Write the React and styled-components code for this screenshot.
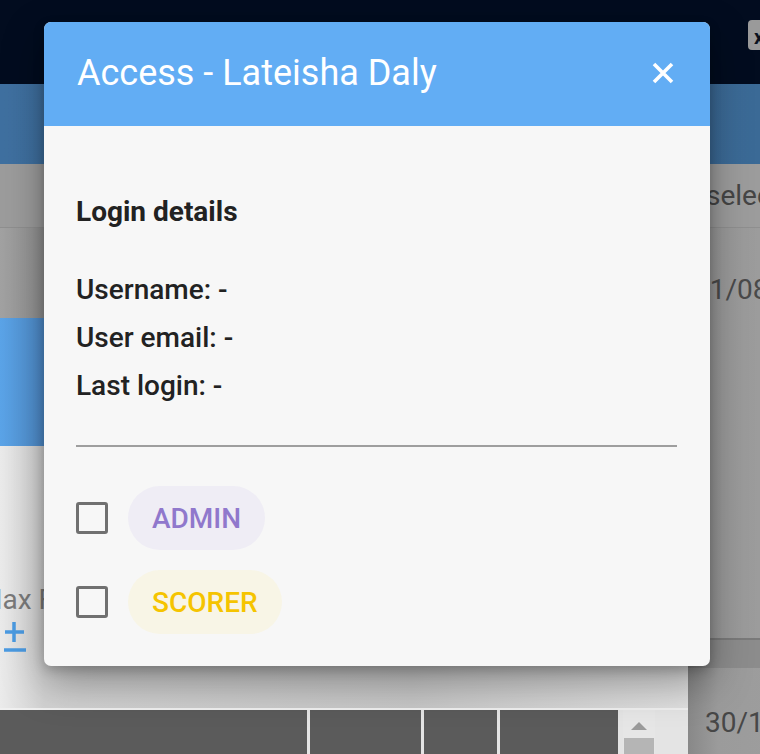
import React from "react";
import styled, { createGlobalStyle } from "styled-components";

const GlobalStyle = createGlobalStyle`
  html, body {
    margin: 0;
    padding: 0;
    height: 100%;
    overflow: hidden;
  }
  body {
    font-family: Roboto, "Liberation Sans", Arial, sans-serif;
    background: #020c1f;
  }
`;

const Page = styled.div`
  display: flex;
  flex-direction: column;
  height: 754px;
  width: 760px;
  overflow: hidden;
  position: relative;
`;

const TopBar = styled.div`
  align-items: flex-start;
  background: #020c1f;
  display: flex;
  height: 84px;
  justify-content: flex-end;
  padding-top: 20px;
  box-sizing: border-box;
`;

const TabStub = styled.div`
  background: #9a9a9a;
  border-radius: 4px 0 0 4px;
  color: #0a1220;
  font-size: 20px;
  font-weight: 700;
  height: 30px;
  line-height: 34px;
  padding-left: 6px;
  width: 6px;
  overflow: hidden;
`;

const AppHeader = styled.div`
  background: linear-gradient(90deg, #3f70a0, #3b6a96);
  height: 80px;
`;

const FilterBar = styled.div`
  background: #9c9c9c;
  display: grid;
  grid-template-columns: 688px 1fr;
  height: 64px;
  border-bottom: 1px solid #8f8f8f;
  box-sizing: border-box;
`;

const DimText = styled.span`
  color: ${(p) => p.color || "#454545"};
  font-size: 28px;
  padding-left: ${(p) => p.indent || 18}px;
  padding-top: ${(p) => p.top || 0}px;
  white-space: nowrap;
  align-self: ${(p) => (p.top ? "flex-start" : "center")};
`;

const Main = styled.div`
  display: grid;
  flex: 1;
  grid-template-columns: 688px 1fr;
  min-height: 0;
`;

const LeftPane = styled.div`
  display: flex;
  flex-direction: column;
`;

const GrayBlock = styled.div`
  background: linear-gradient(90deg, #a2a2a2, #8a8a8a 60px);
  height: 90px;
`;

const BlueBlock = styled.div`
  background: linear-gradient(90deg, #5ba4e8, #4f8dcc 44px);
  height: 128px;
`;

const LightBlock = styled.div`
  background: linear-gradient(90deg, #ebebeb, #d2d2d2 44px, #c8c8c8 60%, #e0e0e0);
  display: flex;
  flex: 1;
  flex-direction: column;
  justify-content: flex-end;
  padding-bottom: 54px;
`;

const FieldLabel = styled.div`
  color: #7a7a7a;
  font-size: 28px;
  margin-left: -22px;
  white-space: nowrap;
`;

const PlusMinus = styled.svg`
  display: block;
  margin: 4px 0 0 3px;
`;

const TableHead = styled.div`
  background: #e4e4e4;
  border-top: 2px solid #f0f0f0;
  display: flex;
  gap: 3px;
  height: 46px;
  box-sizing: border-box;
`;

const HeadCell = styled.div`
  background: #5b5b5b;
  width: ${(p) => p.w}px;
`;

const ScrollTrack = styled.div`
  align-items: center;
  background: #e6e6e6;
  display: flex;
  flex-direction: column;
  margin-left: 2px;
  width: 32px;
`;

const ScrollArrow = styled.div`
  border-bottom: 8px solid #9a9a9a;
  border-left: 8px solid transparent;
  border-right: 8px solid transparent;
  height: 0;
  margin-top: 12px;
  width: 0;
`;

const ScrollThumb = styled.div`
  background: #b5b5b5;
  height: 20px;
  margin-top: 8px;
  width: 30px;
`;

const RightPane = styled.div`
  display: flex;
  flex-direction: column;
`;

const SideCard = styled.div`
  background: linear-gradient(90deg, #828282, #999 24px, #a2a2a2);
  display: flex;
  height: 412px;
  border-bottom: 2px solid #7a7a7a;
  box-sizing: border-box;
`;

const SideBand = styled.div`
  background: linear-gradient(90deg, #7c7c7c, #8c8c8c 30px);
  height: 28px;
`;

const SideRow = styled.div`
  background: linear-gradient(90deg, #888, #9b9b9b 30px, #a0a0a0);
  flex: 1;
  display: flex;
`;

/* modal */

const Modal = styled.div`
  background: #f7f7f7;
  border-radius: 7px;
  box-shadow: 0 16px 40px rgba(0, 0, 0, 0.35), 0 4px 12px rgba(0, 0, 0, 0.2);
  left: 44px;
  overflow: hidden;
  position: absolute;
  top: 22px;
  width: 666px;
`;

const ModalHeader = styled.div`
  align-items: center;
  background: #62adf4;
  box-sizing: border-box;
  display: flex;
  height: 104px;
  justify-content: space-between;
  padding: 0 36px 2px 33px;
`;

const ModalTitle = styled.h2`
  color: #fff;
  font-size: 36px;
  font-weight: 400;
  margin: 0;
`;

const CloseButton = styled.button`
  background: none;
  border: none;
  cursor: pointer;
  display: flex;
  padding: 0;
`;

const ModalBody = styled.div`
  padding: 70px 32px 32px;
`;

const SectionTitle = styled.div`
  color: #222;
  font-size: 28px;
  font-weight: 700;
  line-height: 32px;
`;

const Details = styled.div`
  margin-top: 38px;
`;

const DetailLine = styled.div`
  color: #222;
  font-size: 28px;
  font-weight: 500;
  line-height: 48px;
`;

const Divider = styled.hr`
  border: none;
  border-top: 2px solid #9e9e9e;
  margin: 35px 1px 39px 0;
`;

const Roles = styled.div`
  display: flex;
  flex-direction: column;
  gap: 20px;
`;

const RoleRow = styled.label`
  align-items: center;
  display: flex;
  gap: 20px;
`;

const Box = styled.span`
  border: 3px solid #707070;
  border-radius: 3px;
  box-sizing: border-box;
  display: block;
  height: 32px;
  width: 32px;
`;

const Chip = styled.span`
  align-items: center;
  background: ${(p) => p.bg};
  border-radius: 32px;
  box-sizing: border-box;
  color: ${(p) => p.fg};
  display: flex;
  font-size: 28px;
  font-weight: 500;
  height: 64px;
  padding: 0 24px;
`;

const roles = [
  { name: "ADMIN", bg: "#efedf5", fg: "#9078cc" },
  { name: "SCORER", bg: "#f8f5e6", fg: "#f5c400" },
];

export default function App() {
  return (
    <>
      <GlobalStyle />
      <Page>
        <TopBar>
          <TabStub>x</TabStub>
        </TopBar>
        <AppHeader />
        <FilterBar>
          <span />
          <DimText indent={18}>select date</DimText>
        </FilterBar>
        <Main>
          <LeftPane>
            <GrayBlock />
            <BlueBlock />
            <LightBlock>
              <FieldLabel>Max Fee</FieldLabel>
              <PlusMinus width="24" height="34" viewBox="0 0 24 34">
                <path
                  d="M11 2v20M2 12h19M1 30h22"
                  stroke="#4b9be2"
                  strokeWidth="3.5"
                  fill="none"
                />
              </PlusMinus>
            </LightBlock>
            <TableHead>
              <HeadCell w={307} />
              <HeadCell w={111} />
              <HeadCell w={73} />
              <HeadCell w={118} />
              <ScrollTrack>
                <ScrollArrow />
                <ScrollThumb />
              </ScrollTrack>
            </TableHead>
          </LeftPane>
          <RightPane>
            <SideCard>
              <DimText indent={6} top={45} color="#4a4a4a">
                01/08/2023
              </DimText>
            </SideCard>
            <SideBand />
            <SideRow>
              <DimText indent={17} top={38} color="#474747">
                30/11/2023
              </DimText>
            </SideRow>
          </RightPane>
        </Main>

        <Modal>
          <ModalHeader>
            <ModalTitle>Access - Lateisha Daly</ModalTitle>
            <CloseButton aria-label="close">
              <svg width="22" height="22" viewBox="0 0 22 22">
                <path
                  d="M2 2l18 18M20 2L2 20"
                  stroke="#fff"
                  strokeWidth="3.6"
                  fill="none"
                />
              </svg>
            </CloseButton>
          </ModalHeader>
          <ModalBody>
            <SectionTitle>Login details</SectionTitle>
            <Details>
              <DetailLine>Username: -</DetailLine>
              <DetailLine>User email: -</DetailLine>
              <DetailLine>Last login: -</DetailLine>
            </Details>
            <Divider />
            <Roles>
              {roles.map((r) => (
                <RoleRow key={r.name}>
                  <Box />
                  <Chip bg={r.bg} fg={r.fg}>
                    {r.name}
                  </Chip>
                </RoleRow>
              ))}
            </Roles>
          </ModalBody>
        </Modal>
      </Page>
    </>
  );
}
